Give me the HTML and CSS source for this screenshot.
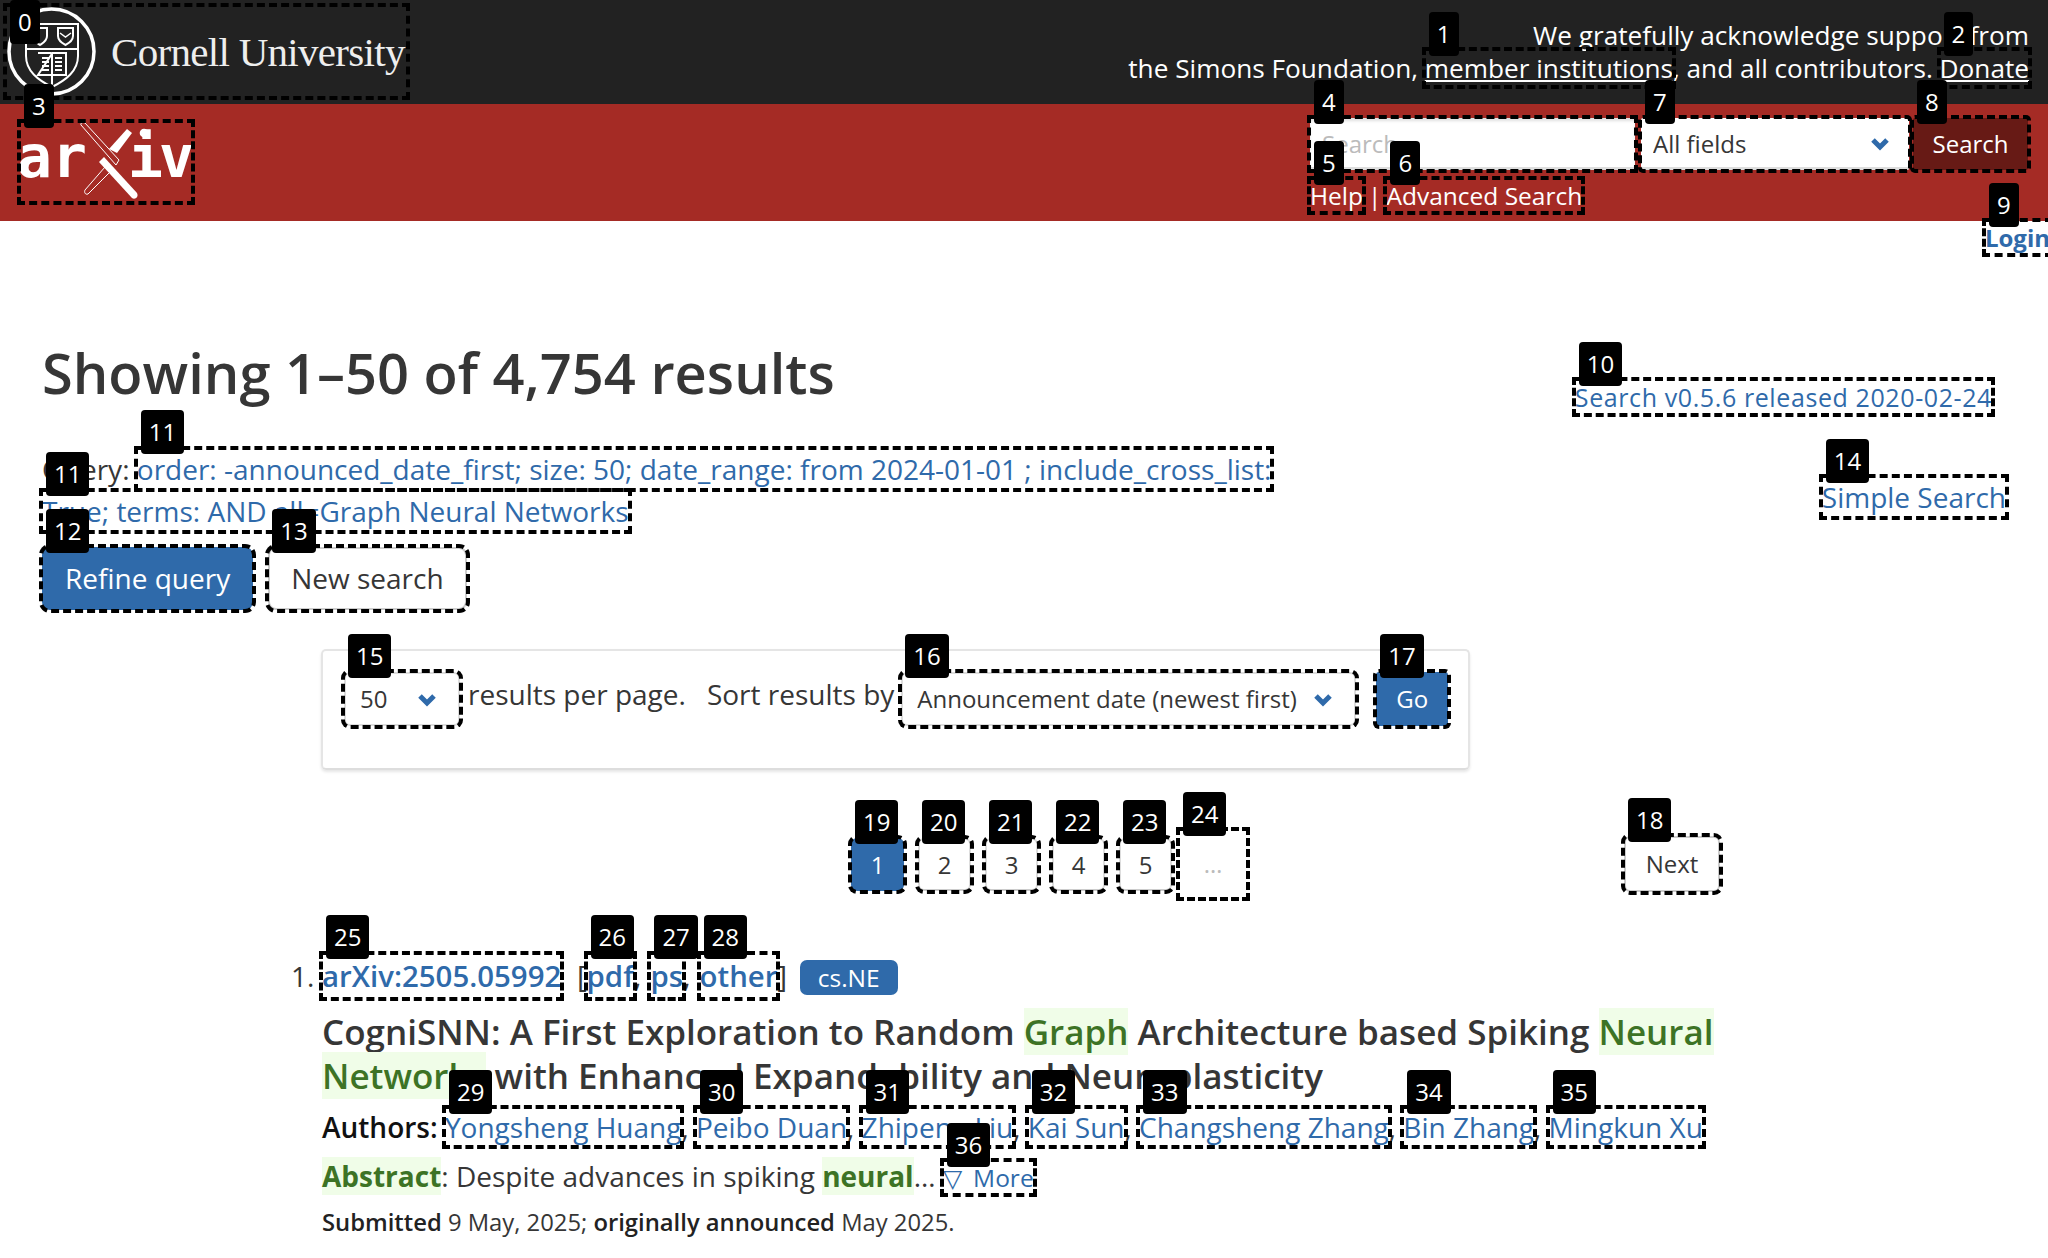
FILE: index.html
```html
<!DOCTYPE html>
<html lang="en">
<head>
    <meta charset="UTF-8">
    <meta name="viewport" content="width=device-width, initial-scale=1.0">
    <title>Search | arXiv e-print repository</title>
    <link rel="stylesheet" href="styles.css">
</head>
<body>
    <div class="top-bar">
        <a class="cornell mark" href="#"><span class="badge badge-clamped">0</span>
            <svg class="seal" viewBox="6 6 91 91" width="91" height="91" fill="none" stroke="#fff">
                <circle cx="51.5" cy="51.5" r="42.5" stroke-width="3.5"/>
                <path d="M26 24H78V56C78 71 66 80 52 87C38 80 26 71 26 56Z" stroke-width="2"/>
                <path d="M26 49H78" stroke-width="2"/>
                <path d="M58 28H73V36C73 41 69 43 65.500 45C62 43 58 41 58 36Z" stroke-width="2"/>
                <path d="M60 33L65.500 37L71 33" stroke-width="1.500"/>
                <path d="M33 28H47V36C47 41 43 43 40 45C37 43 33 41 33 36Z" stroke-width="2"/>
                <path d="M38 53H51.500M52.500 53H66V75H38ZM52 53V87" stroke-width="2"/>
                <path d="M42 58H49M42 62H49M42 66H49M42 70H49M55 58H62M55 62H62M55 66H62M55 70H62" stroke-width="2"/>
            </svg>
            <span class="cornell-name">Cornell University</span>
        </a>
        <p class="acks">We gratefully acknowledge support from<br>the Simons Foundation, <a class="mark" href="#"><span class="badge">1</span>member institutions</a>, and all contributors. <a class="mark" href="#"><span class="badge">2</span>Donate</a></p>
    </div>

    <div class="red-bar">
        <a class="arxiv-logo mark" href="#"><span class="badge">3</span>
            <svg viewBox="20 122 172 80" width="172" height="80">
                <text class="logo-text" x="17" y="177">ar</text>
                <text class="logo-text" x="128" y="177" letter-spacing="-4">iv</text>
                <circle cx="144" cy="133" r="4.300" fill="#fff"/>
                <path d="M127 129L132 133L117 153L109 149Z" fill="#fff"/>
                <path d="M104 157L99 162L132 198C135 200 139 197 137 193Z" fill="#fff"/>
                <path d="M81 125C80 123 83 122 85 123L119 160L116 165ZM110 172L88 194C85 195 84 192 85 190L105 167" fill="none" stroke="#fff" stroke-width="1"/>
            </svg>
        </a>
        <div class="search-box">
            <form class="search-form">
                <div class="mark search-input-wrap"><span class="badge">4</span><input class="search-input" type="text" placeholder="Search"></div>
                <div class="mark select-wrap field-select"><span class="badge">7</span>
                    <select class="header-select"><option>All fields</option></select>
                    <svg class="chevron" viewBox="0 0 18 14" width="18" height="14"><path d="M2 3L9 10L16 3" fill="none" stroke="#2f6aaa" stroke-width="5"/></svg>
                </div>
                <button class="mark search-btn" type="button"><span class="badge">8</span>Search</button>
            </form>
            <div class="search-links">
                <a class="mark" href="#"><span class="badge">5</span>Help</a>
                <span class="sep">|</span>
                <a class="mark" href="#"><span class="badge">6</span>Advanced Search</a>
            </div>
        </div>
    </div>

    <div class="login-row"><a class="mark" href="#"><span class="badge">9</span>Login</a></div>

    <div class="results-head">
        <div class="results-left">
            <h1 class="title">Showing 1–50 of 4,754 results</h1>
            <p class="query">Query: <a class="mark" href="#"><span class="badge">11</span>order: -announced_date_first; size: 50; date_range: from 2024-01-01 ; include_cross_list:</a><br><a class="mark" href="#"><span class="badge">11</span>True; terms: AND all=Graph Neural Networks</a></p>
            <div class="query-buttons">
                <a class="mark btn btn-blue" href="#"><span class="badge">12</span>Refine query</a>
                <a class="mark btn" href="#"><span class="badge">13</span>New search</a>
            </div>
        </div>
        <div class="results-right">
            <a class="mark version" href="#"><span class="badge">10</span>Search v0.5.6 released 2020-02-24</a>
            <a class="mark simple" href="#"><span class="badge">14</span>Simple Search</a>
        </div>
    </div>

    <form class="filter-panel">
        <div class="mark select-wrap size-select"><span class="badge">15</span>
            <select class="panel-select"><option>50</option></select>
            <svg class="chevron" viewBox="0 0 18 14" width="18" height="14"><path d="M2 3L9 10L16 3" fill="none" stroke="#2f6aaa" stroke-width="5"/></svg>
        </div>
        <span class="filter-label">results per page.</span>
        <span class="filter-label sort-label">Sort results by</span>
        <div class="mark select-wrap order-select"><span class="badge">16</span>
            <select class="panel-select"><option>Announcement date (newest first)</option></select>
            <svg class="chevron" viewBox="0 0 18 14" width="18" height="14"><path d="M2 3L9 10L16 3" fill="none" stroke="#2f6aaa" stroke-width="5"/></svg>
        </div>
        <button class="mark go-btn" type="button"><span class="badge">17</span>Go</button>
    </form>

    <nav class="pagination">
        <a class="mark page page-current" href="#"><span class="badge">19</span>1</a>
        <a class="mark page" href="#"><span class="badge">20</span>2</a>
        <a class="mark page" href="#"><span class="badge">21</span>3</a>
        <a class="mark page" href="#"><span class="badge">22</span>4</a>
        <a class="mark page" href="#"><span class="badge">23</span>5</a>
        <span class="mark page-dots"><span class="badge">24</span>…</span>
        <a class="mark page page-next" href="#"><span class="badge">18</span>Next</a>
    </nav>

    <div class="result">
        <p class="result-links"><span class="result-num">1.</span> <a class="mark" href="#"><span class="badge">25</span>arXiv:2505.05992</a><span class="bracket bracket-open"> [</span><a class="mark" href="#"><span class="badge">26</span>pdf</a><span class="comma">,</span><a class="mark" href="#"><span class="badge">27</span>ps</a><span class="comma">,</span><a class="mark" href="#"><span class="badge">28</span>other</a><span class="bracket">]</span>
            <span class="tag">cs.NE</span></p>
        <p class="result-title">CogniSNN: A First Exploration to Random <span class="hit">Graph</span> Architecture based Spiking <span class="hit">Neural</span> <span class="hit">Networks</span> with Enhanced Expandability and Neuroplasticity</p>
        <p class="authors"><b>Authors:</b> <a class="mark" href="#"><span class="badge">29</span>Yongsheng Huang</a>, <a class="mark" href="#"><span class="badge">30</span>Peibo Duan</a>, <a class="mark" href="#"><span class="badge">31</span>Zhipeng Liu</a>, <a class="mark" href="#"><span class="badge">32</span>Kai Sun</a>, <a class="mark" href="#"><span class="badge">33</span>Changsheng Zhang</a>, <a class="mark" href="#"><span class="badge">34</span>Bin Zhang</a>, <a class="mark" href="#"><span class="badge">35</span>Mingkun Xu</a></p>
        <p class="abstract"><b class="hit">Abstract</b>: Despite advances in spiking <b class="hit">neural</b>… <a class="mark more" href="#"><span class="badge">36</span>▽ More</a></p>
        <p class="dates"><b>Submitted</b> 9 May, 2025; <b>originally announced</b> May 2025.</p>
    </div>
</body>
</html>
```
FILE: styles.css
```css
html, body {
    margin: 0;
    height: 1258px;
    overflow: hidden;
}
body {
    font-family: "Open Sans", sans-serif;
    font-size: 28px;
    color: #363636;
    background: #fff;
}
a {
    color: #2f6aaa;
    text-decoration: none;
}
p {
    margin: 0;
}

/* numbered dashed boxes laid over the page */
.mark {
    position: relative;
    outline: 4px dashed #000;
    outline-offset: -1px;
}
.badge {
    position: absolute;
    top: -38px;
    left: 4px;
    z-index: 5;
    height: 44px;
    padding: 0 8px;
    border-radius: 4px;
    background: #000;
    color: #fff;
    font-family: "Open Sans", sans-serif;
    font-size: 24px;
    font-weight: 400;
    letter-spacing: 0;
    line-height: 44px;
    white-space: nowrap;
}
.badge-clamped {
    top: -6px;
}
.btn .badge,
.page .badge,
.size-select .badge,
.order-select .badge {
    top: -40px;
    left: 2px;
}

/* dark strip */
.top-bar {
    display: flex;
    justify-content: space-between;
    height: 104px;
    background: #222;
    color: #fff;
}
.cornell {
    display: flex;
    align-items: center;
    gap: 14px;
    width: 401px;
    height: 91px;
    margin: 6px;
}
.seal {
    flex: none;
}
.cornell-name {
    font-family: "Liberation Serif", serif;
    font-size: 41px;
    letter-spacing: -0.7px;
    color: #eee;
    white-space: nowrap;
}
.acks {
    padding: 19px 19px 0 0;
    font-size: 26.2px;
    line-height: 33px;
    text-align: right;
}
.acks a {
    color: #fff;
    text-decoration: underline;
}

/* red strip */
.red-bar {
    display: flex;
    justify-content: space-between;
    height: 117px;
    background: #a52b25;
}
.arxiv-logo {
    display: block;
    width: 172px;
    height: 80px;
    margin: 18px 0 0 20px;
}
.logo-text {
    font-family: "DejaVu Sans Mono", monospace;
    font-size: 58px;
    font-weight: 700;
    fill: #fff;
}
.search-box {
    width: 718px;
    padding: 14px 20px 0 0;
}
.search-form {
    display: flex;
    height: 52px;
}
.search-input-wrap {
    width: 325px;
    margin-right: 6px;
}
.search-input {
    box-sizing: border-box;
    display: block;
    width: 100%;
    height: 100%;
    padding: 0 12px 2px;
    border: 0;
    border-radius: 2px;
    box-shadow: inset 0 3px 3px rgba(10, 10, 10, .12), inset 0 -3px 0 #ddd;
    font: 24px "Open Sans", sans-serif;
    outline: none;
}
.search-input::placeholder {
    color: #bbb;
}
.select-wrap {
    display: block;
    background: #fff;
}
.field-select {
    width: 268px;
    margin-right: 4px;
    border-radius: 2px;
    box-shadow: inset 0 -3px 0 #ddd;
}
.select-wrap select {
    display: block;
    width: 100%;
    height: 100%;
    border: 0;
    background: transparent;
    color: #363636;
    appearance: none;
    outline: none;
}
.header-select {
    padding: 0 12px 2px;
    font: 24px "Open Sans", sans-serif;
}
.chevron {
    position: absolute;
    top: 50%;
    right: 20px;
    margin-top: -7px;
    pointer-events: none;
}
.search-btn {
    width: 115px;
    padding-bottom: 2px;
    border: 0;
    border-radius: 2px;
    background: #671a15;
    color: #fff;
    font: 24px "Open Sans", sans-serif;
}
.search-links {
    display: flex;
    align-items: center;
    gap: 5px;
    margin-top: 9px;
    color: #fff;
    font-size: 24.5px;
    line-height: 33px;
}
.search-links a {
    color: #fff;
}
.login-row {
    display: flex;
    justify-content: flex-end;
    margin-right: -2px;
    font-size: 24px;
    font-weight: 700;
    line-height: 33px;
}

/* results heading */
.results-head {
    display: flex;
    justify-content: space-between;
    padding: 0 39px 0 42px;
}
.title {
    margin: 83px 0 0;
    font-size: 56px;
    font-weight: 600;
    line-height: 70px;
    color: #363636;
}
.query {
    margin-top: 41px;
    line-height: 42px;
}
.query a {
    padding: 1px 0;
}
.query .badge {
    top: -39px;
    padding: 0 8px;
}
.query-buttons {
    display: flex;
    gap: 15px;
    margin-top: 15px;
}
.btn {
    box-sizing: border-box;
    height: 63px;
    padding: 0 21px;
    border: 2px solid #ccc;
    border-radius: 8px;
    color: #363636;
    line-height: 59px;
}
.btn-blue {
    border-color: #2f6aaa;
    background: #2f6aaa;
    color: #fff;
}
.results-right {
    display: flex;
    flex-direction: column;
    align-items: flex-end;
    padding-top: 126px;
}
.version {
    margin-right: 17px;
    font-size: 25px;
    letter-spacing: .6px;
    line-height: 34px;
}
.simple {
    margin: 63px 3px 0 0;
    line-height: 40px;
}

/* sort form */
.filter-panel {
    box-sizing: border-box;
    display: flex;
    align-items: flex-start;
    width: 1149px;
    height: 121px;
    margin: 39px 0 0 321px;
    padding: 21px 19px 0 21px;
    border: 2px solid #e5e5e5;
    border-bottom-color: #ddd;
    border-radius: 5px;
    box-shadow: 0 2px 3px rgba(10, 10, 10, .1);
    white-space: nowrap;
}
.size-select,
.order-select {
    box-sizing: border-box;
    flex: none;
    height: 54px;
    border: 2px solid #ddd;
    border-radius: 6px;
}
.size-select {
    width: 116px;
}
.order-select {
    width: 455px;
    margin-right: 20px;
}
.panel-select {
    padding: 0 14px 2px;
    font: 24px "Open Sans", sans-serif;
}
.size-select .chevron,
.order-select .chevron {
    right: 22px;
    margin-top: -6px;
}
.filter-label {
    margin-left: 8px;
    line-height: 44px;
}
.sort-label {
    margin: 0 7px 0 21px;
}
.go-btn {
    flex: none;
    width: 72px;
    height: 54px;
    padding-bottom: 2px;
    border: 0;
    border-radius: 3px;
    background: #2f6aaa;
    color: #fff;
    font: 24px "Open Sans", sans-serif;
}

/* pages */
.pagination {
    display: flex;
    align-items: center;
    height: 62px;
    margin: 63px 0 0 851px;
    font-size: 24px;
}
.page {
    box-sizing: border-box;
    width: 53px;
    height: 53px;
    margin-right: 14px;
    border: 2px solid #ddd;
    border-bottom-color: #ccc;
    border-radius: 6px;
    color: #363636;
    line-height: 49px;
    text-align: center;
}
.page-current {
    border-color: #2f6aaa;
    background: #2f6aaa;
    color: #fff;
}
.page-dots {
    width: 68px;
    height: 68px;
    margin-left: -7px;
    color: #bbb;
    line-height: 68px;
    text-align: center;
}
.page-next {
    width: 96px;
    height: 56px;
    margin: 0 0 0 377px;
    border-color: #ccc;
    line-height: 52px;
}

/* one result */
.result {
    width: 1410px;
    margin: 59px 0 0 322px;
}
.result-links {
    font-size: 29.4px;
    font-weight: 600;
    line-height: 44px;
    white-space: nowrap;
}
.result-links a {
    padding: 2px 0;
}
.result-links .badge {
    top: -39px;
    padding: 0 8px;
}
.result-num {
    margin-left: -31px;
    font-size: 28px;
    font-weight: 400;
}
.bracket {
    font-weight: 400;
}
.bracket-open {
    margin-left: 8px;
}
.comma {
    font-weight: 400;
    margin-right: 9px;
}
.tag {
    display: inline-block;
    height: 35px;
    margin-left: 5px;
    padding: 0 18px;
    border-radius: 7px;
    background: #2f6aaa;
    color: #fff;
    font-size: 24.5px;
    font-weight: 400;
    line-height: 35px;
    vertical-align: 0;
}
.result-title {
    margin-top: 12px;
    font-size: 35px;
    font-weight: 600;
    line-height: 44px;
}
.hit {
    background: #f0fde8;
    color: #3d7325;
}
.authors {
    margin-top: 6px;
    line-height: 46px;
    white-space: nowrap;
}
.authors b {
    color: #111;
    font-weight: 600;
}
.abstract {
    margin-top: 3px;
    line-height: 46px;
}
.more {
    font-size: 24.5px;
    word-spacing: 5px;
}
.dates {
    margin-top: 3px;
    font-size: 23.8px;
    line-height: 36px;
}
.dates b {
    color: #222;
    font-weight: 600;
}
```
